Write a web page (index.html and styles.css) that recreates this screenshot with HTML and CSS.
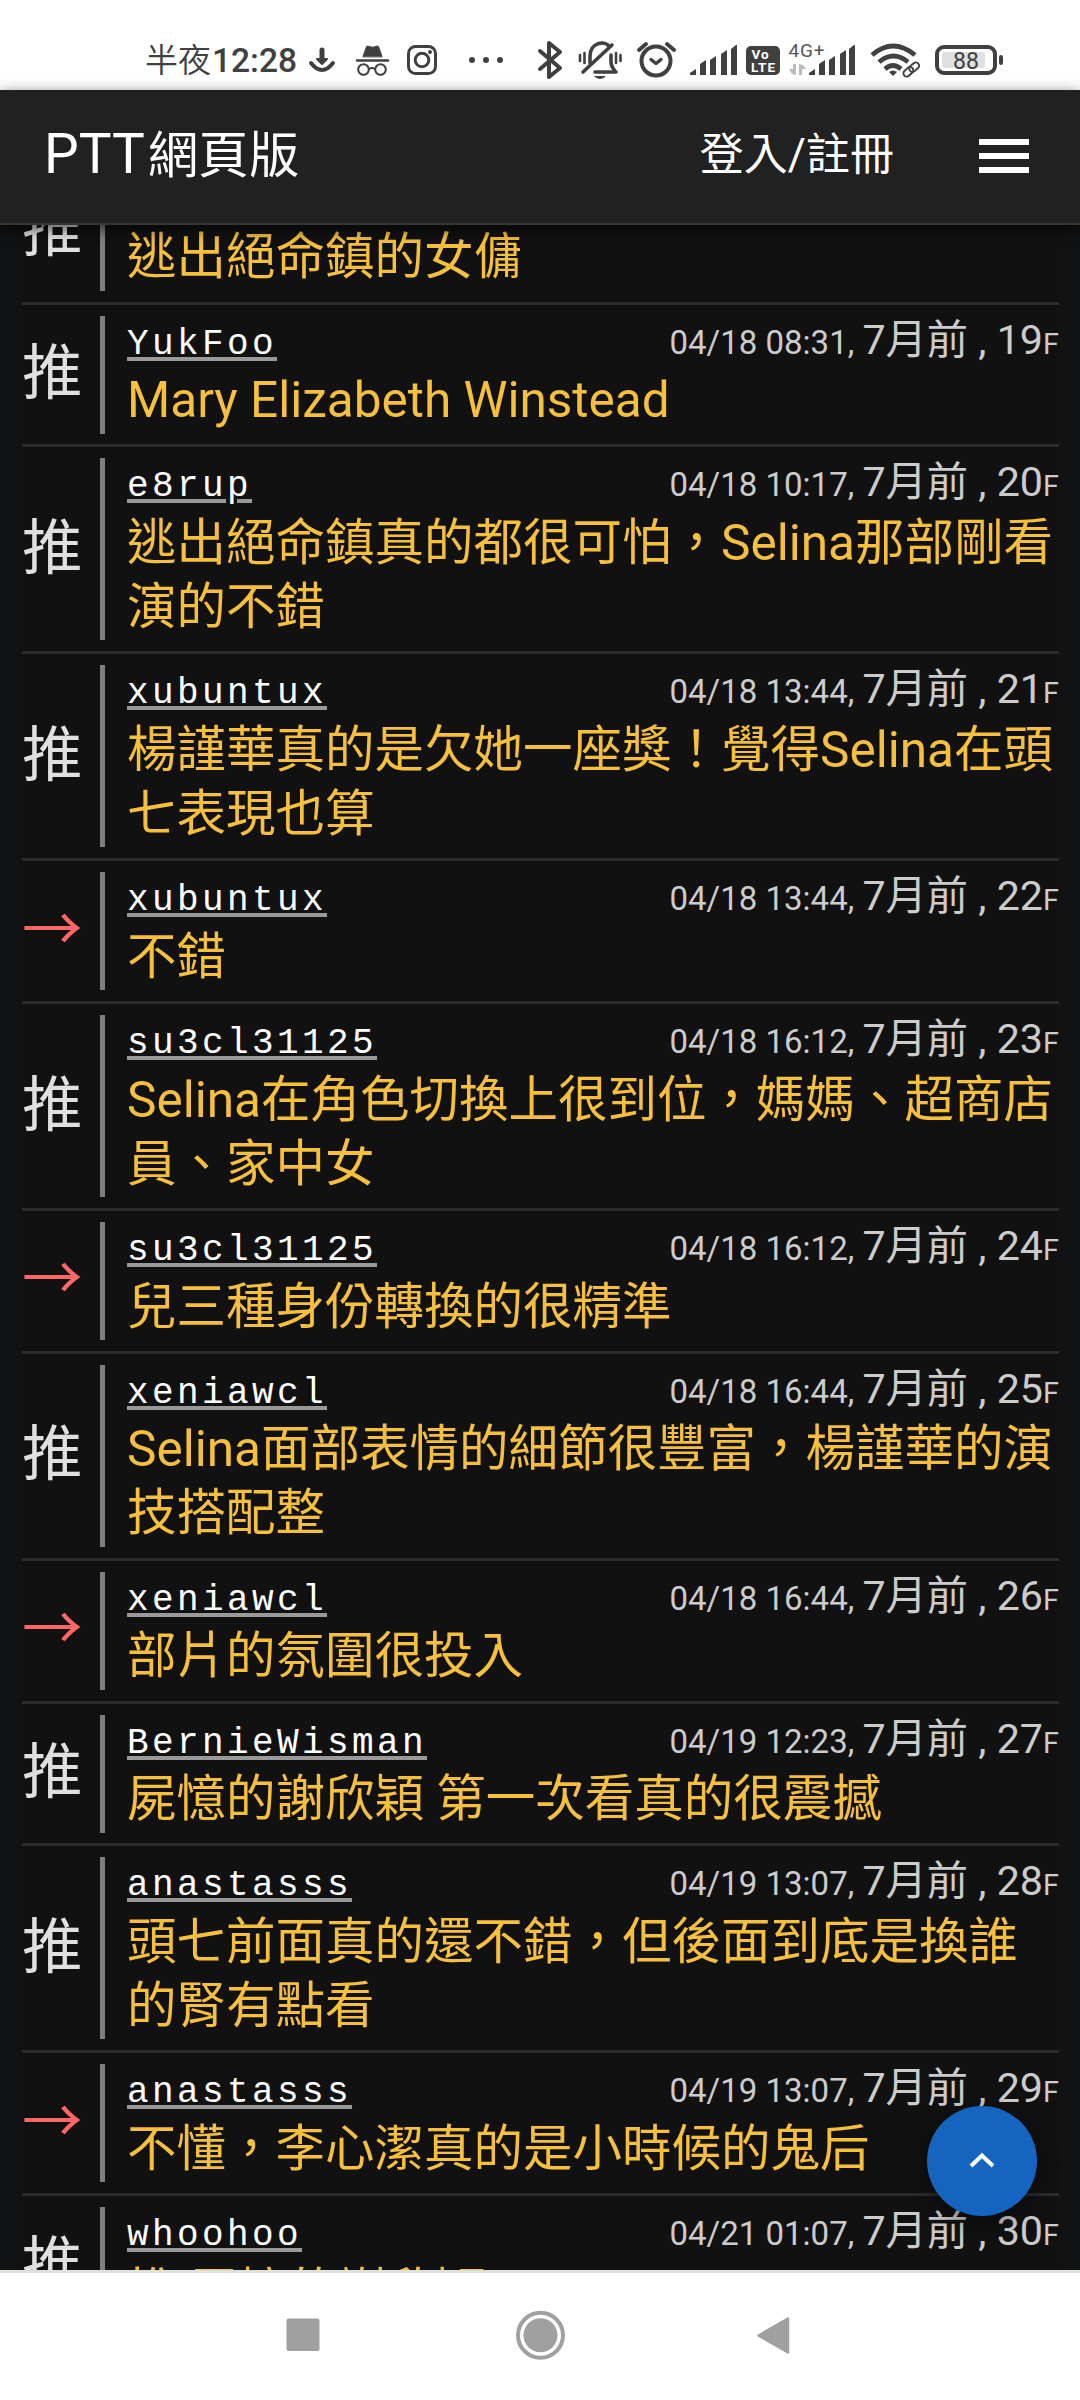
FILE: index.html
```html
<!DOCTYPE html>
<html lang="zh-Hant">
<head>
<meta charset="utf-8">
<title>PTT網頁版</title>
<link rel="stylesheet" href="styles.css">
</head>
<body>
<div class="status">
  <span class="clock"><span class="clock-word">半夜</span>12:28</span>
  <svg class="status-icons" width="760" height="70" viewBox="300 20 760 70" fill="none" stroke="#404040" stroke-linecap="round" stroke-linejoin="round">
    <!-- download -->
    <g stroke-width="5"><path d="M322 50v10"/><path d="M311 63q11 14 22 0" stroke-width="4"/><path d="M317 59h10l-5 5z" fill="#404040" stroke-width="2"/></g>
    <!-- incognito -->
    <g><path d="M363 56.500l3.500-10q1-1 3 0q3 1.500 6 0q2-1 3 0l3.500 10z" fill="#404040" stroke-width="1"/><path d="M357 60.500h31" stroke-width="2.400"/><circle cx="363.500" cy="69.500" r="5.300" stroke-width="2"/><circle cx="380.500" cy="69.500" r="5.300" stroke-width="2"/><path d="M369 69q3-2 6 0" stroke-width="1.800"/></g>
    <!-- camera app -->
    <g stroke-width="3"><rect x="408.500" y="46.500" width="27" height="27" rx="7"/><circle cx="422" cy="60" r="6.800"/><circle cx="430" cy="52" r="1" stroke-width="2"/></g>
    <!-- more -->
    <g fill="#404040" stroke="none"><circle cx="472" cy="60" r="3"/><circle cx="486" cy="60" r="3"/><circle cx="500" cy="60" r="3"/></g>
    <!-- bluetooth -->
    <path d="M540 51l20 17l-11 9v-34l11 9l-20 17" stroke-width="4"/>
    <!-- muted bell -->
    <g stroke-width="3.600"><path d="M590 63v-7c0-13 14-16 19-10"/><path d="M611 55v7q0 4 4 9"/><path d="M612 45l-29 27"/><path d="M595 72h21" /><path d="M580 55v6M584.500 53v10" stroke-width="2.600"/><path d="M616 53v10M620.500 55v6" stroke-width="2.600"/><path d="M595 76.500h10q-5 4-10 0z" fill="#404040" stroke-width="1"/></g>
    <!-- alarm -->
    <g stroke-width="4"><circle cx="656" cy="61" r="14.500"/><path d="M651 59.500l5 4l5-4" stroke-width="3.500"/><path d="M639 50l7-6M667 44l7 6"/></g>
    <!-- signal bars -->
    <g fill="#404040" stroke="none"><path d="M690 75v-2l6-4v6zM700 75v-11l6-4v15zM710 75v-15l6-4v19zM721 75v-21l6-4v25zM731 75v-26l5-4h1v30z"/><path d="M809 75v-2l6-4v6zM819 75v-11l6-4v15zM829 75v-15l6-4v19zM840 75v-21l6-4v25zM849 75v-26l5-4h1v30z"/></g>
    <!-- data arrows -->
    <g fill="#bbb" stroke="none"><path d="M796 64v11l-4-1l-3-5h4v-5zM799 75V64l4 1l3 4h-4v6z"/></g>
    <!-- wifi -->
    <g stroke-width="4.600" stroke-linecap="butt"><path d="M872 55q21-18 43 0"/><path d="M879 62q14.500-12 29 0" /><path d="M885 69q8-7 16 0"/><path d="M889 72q4-3 8 0l-4 4z" fill="#404040" stroke="none"/></g>
    <g stroke="#fff" stroke-width="6"><rect x="909" y="65" width="11" height="7" rx="3.500" transform="rotate(-42 914 68)"/></g>
    <g stroke-width="1.900"><rect x="908.500" y="64" width="11" height="6.500" rx="3.200" transform="rotate(-42 914 67)"/><rect x="903" y="68.500" width="11" height="6.500" rx="3.200" transform="rotate(-42 908.500 72)"/></g>
    <!-- battery -->
    <rect x="937" y="47" width="58" height="26" rx="7" stroke-width="4"/><rect x="942" y="52" width="43" height="16" rx="2" fill="#e0e0e0" stroke="none"/><path d="M1001 57v6" stroke-width="4"/>
    <rect x="746" y="46" width="34" height="29" rx="5" fill="#404040" stroke="none"/>
    <g class="icon-text" stroke="none">
      <text x="751.500" y="58.500" class="volte" textLength="17">Vo</text>
      <text x="751" y="71.500" class="volte" textLength="24">LTE</text>
      <text x="788.500" y="56.500" class="net" textLength="36">4G+</text>
      <text x="953" y="69" class="batt" textLength="26">88</text>
    </g>
  </svg>
</div>
<header class="bar">
  <div class="brand">PTT<span class="brand-zh">網頁版</span></div>
  <div class="login">登入/註冊</div>
  <div class="menu"><i></i><i></i><i></i></div>
</header>
<main class="view">
  <div class="list">
    <div class="row"><div class="tag">推</div><div class="body"><div class="head"></div><p>逃出絕命鎮的女傭</p></div></div>
    <div class="row"><div class="tag">推</div><div class="body"><div class="head"><a class="user">YukFoo</a><span class="meta">04/18 08:31, <b>7月前 , 19</b><small>F</small></span></div><p>Mary Elizabeth Winstead</p></div></div>
    <div class="row"><div class="tag">推</div><div class="body"><div class="head"><a class="user">e8rup</a><span class="meta">04/18 10:17, <b>7月前 , 20</b><small>F</small></span></div><p>逃出絕命鎮真的都很可怕，Selina那部剛看<br>演的不錯</p></div></div>
    <div class="row"><div class="tag">推</div><div class="body"><div class="head"><a class="user">xubuntux</a><span class="meta">04/18 13:44, <b>7月前 , 21</b><small>F</small></span></div><p>楊謹華真的是欠她一座獎！覺得Selina在頭<br>七表現也算</p></div></div>
    <div class="row"><div class="tag arrow">→</div><div class="body"><div class="head"><a class="user">xubuntux</a><span class="meta">04/18 13:44, <b>7月前 , 22</b><small>F</small></span></div><p>不錯</p></div></div>
    <div class="row"><div class="tag">推</div><div class="body"><div class="head"><a class="user">su3cl31125</a><span class="meta">04/18 16:12, <b>7月前 , 23</b><small>F</small></span></div><p>Selina在角色切換上很到位，媽媽、超商店<br>員、家中女</p></div></div>
    <div class="row"><div class="tag arrow">→</div><div class="body"><div class="head"><a class="user">su3cl31125</a><span class="meta">04/18 16:12, <b>7月前 , 24</b><small>F</small></span></div><p>兒三種身份轉換的很精準</p></div></div>
    <div class="row"><div class="tag">推</div><div class="body"><div class="head"><a class="user">xeniawcl</a><span class="meta">04/18 16:44, <b>7月前 , 25</b><small>F</small></span></div><p>Selina面部表情的細節很豐富，楊謹華的演<br>技搭配整</p></div></div>
    <div class="row"><div class="tag arrow">→</div><div class="body"><div class="head"><a class="user">xeniawcl</a><span class="meta">04/18 16:44, <b>7月前 , 26</b><small>F</small></span></div><p>部片的氛圍很投入</p></div></div>
    <div class="row"><div class="tag">推</div><div class="body"><div class="head"><a class="user">BernieWisman</a><span class="meta">04/19 12:23, <b>7月前 , 27</b><small>F</small></span></div><p>屍憶的謝欣穎 第一次看真的很震撼</p></div></div>
    <div class="row"><div class="tag">推</div><div class="body"><div class="head"><a class="user">anastasss</a><span class="meta">04/19 13:07, <b>7月前 , 28</b><small>F</small></span></div><p>頭七前面真的還不錯，但後面到底是換誰<br>的腎有點看</p></div></div>
    <div class="row"><div class="tag arrow">→</div><div class="body"><div class="head"><a class="user">anastasss</a><span class="meta">04/19 13:07, <b>7月前 , 29</b><small>F</small></span></div><p>不懂，李心潔真的是小時候的鬼后</p></div></div>
    <div class="row"><div class="tag">推</div><div class="body"><div class="head"><a class="user">whoohoo</a><span class="meta">04/21 01:07, <b>7月前 , 30</b><small>F</small></span></div><p>推 屍憶的謝欣穎</p></div></div>
  </div>
</main>
<nav class="nav">
  <svg width="1080" height="127" viewBox="0 2273 1080 127" fill="#a0a0a0">
    <rect x="286.500" y="2318.500" width="33" height="32.500" rx="2"/>
    <circle cx="540.500" cy="2335.200" r="22.500" fill="none" stroke="#a0a0a0" stroke-width="4"/><circle cx="540.500" cy="2335.200" r="17"/>
    <path d="M758.500 2335.500L788 2318.500v34z" stroke="#a0a0a0" stroke-width="2.500" stroke-linejoin="round"/>
  </svg>
</nav>
<button class="top"><svg width="30" height="20" viewBox="0 0 30 20" fill="none" stroke="#fff" stroke-width="4"><path d="M4 15L15 4.500L26 15"/></svg></button>
</body>
</html>
```
FILE: styles.css
```css
* { box-sizing: border-box; }
body {
  margin: 0;
  width: 1080px;
  height: 2400px;
  overflow: hidden;
  display: flex;
  flex-direction: column;
  position: relative;
  background: #101214;
  font-family: Roboto, "Noto Sans CJK TC", sans-serif;
}
.status {
  height: 90px;
  flex: none;
  background: #fff;
  display: flex;
  padding: 20px 0 0 145px;
  color: #404040;
}
.clock { width: 155px; flex: none; font-size: 33.500px; line-height: 81px; font-weight: 500; white-space: nowrap; }
.clock-word { font-size: 33px; font-weight: 350; margin-right: 1px; }
.status-icons { flex: none; }
.icon-text { font-family: Roboto, sans-serif; }
.volte { font-size: 13.500px; font-weight: 700; fill: #fff; }
.net { font-size: 19px; fill: #555; }
.batt { font-size: 23px; fill: #404040; }
.bar {
  height: 135px;
  flex: none;
  position: relative;
  z-index: 2;
  display: flex;
  align-items: center;
  padding: 0 51px 3px 44px;
  background: #212121;
  border-bottom: 2px solid #363636;
  box-shadow: 0 4px 14px rgba(0, 0, 0, .65);
  color: #fff;
}
.brand { font-size: 55px; flex: 1; line-height: 70px; }
.brand-zh { font-size: 50.500px; margin-left: 3px; }
.login { font-size: 44px; line-height: 60px; margin-right: 85px; }
.menu { width: 50px; display: grid; gap: 8.500px; padding-top: 2px; }
.menu i { height: 5.500px; background: #fff; }
.view { height: 2045px; flex: none; overflow: hidden; padding: 0 21px 0 22px; }
.list { margin-top: -63.300px; background: #111; }
.row { display: flex; align-items: stretch; padding: 11px 0 10.900px; border-bottom: 3px solid #2b2b2b; }
.tag {
  width: 78px;
  display: flex;
  align-items: center;
  font-size: 60.500px;
  line-height: 64px;
  padding-bottom: 1px;
  color: #e0e0e0;
}
.arrow { color: #ff6666; }
.body { flex: 1; border-left: 5px solid #808080; padding-left: 22px; }
.head { height: 52.600px; display: flex; justify-content: space-between; align-items: baseline; line-height: 48px; }
.user {
  font-family: "Liberation Mono", monospace;
  font-size: 36px;
  letter-spacing: 3.400px;
  color: #fff;
  text-decoration: underline;
  text-decoration-color: #999;
  text-decoration-thickness: 4px;
  text-underline-offset: 3px;
}
.meta { font-size: 33px; color: #ccc; white-space: nowrap; }
.meta b { font-size: 41.250px; font-weight: 400; }
.meta small { font-size: 28.900px; }
p { margin: 0; padding-bottom: 1.400px; font-size: 49.500px; line-height: 64px; color: #f6bf3c; white-space: nowrap; }
.nav { height: 130px; flex: none; background: #fff; border-top: 3px solid #dfe2dc; }
.nav svg { display: block; }
.top {
  position: absolute;
  left: 927px;
  top: 2106px;
  width: 110px;
  height: 110px;
  z-index: 3;
  padding: 0;
  border: 0;
  border-radius: 50%;
  display: grid;
  place-items: center;
  background: #1565c0;
  box-shadow: 0 6px 22px rgba(0, 0, 0, .45);
}
```
